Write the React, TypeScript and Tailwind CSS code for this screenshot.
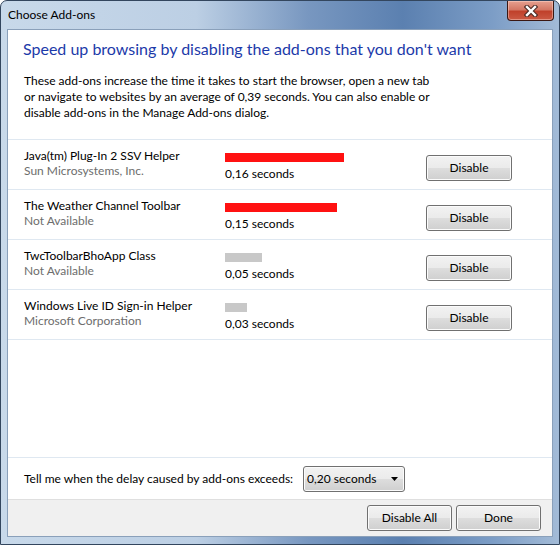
const addons = [
  { name: 'Java(tm) Plug-In 2 SSV Helper', publisher: 'Sun Microsystems, Inc.', time: '0,16', bar: 119, slow: true },
  { name: 'The Weather Channel Toolbar', publisher: 'Not Available', time: '0,15', bar: 112, slow: true },
  { name: 'TwcToolbarBhoApp Class', publisher: 'Not Available', time: '0,05', bar: 37, slow: false },
  { name: 'Windows Live ID Sign-in Helper', publisher: 'Microsoft Corporation', time: '0,03', bar: 22, slow: false },
];

const Btn = ({ children, className = '' }: { children: React.ReactNode; className?: string }) => (
  <button
    className={
      'flex items-center justify-center rounded-[3px] border border-[#707070] bg-[linear-gradient(#f2f2f2_0%,#ebebeb_48%,#dddddd_52%,#cfcfcf_100%)] text-[12px] text-black shadow-[inset_0_0_0_1px_#fbfbfb] ' +
      className
    }
  >
    {children}
  </button>
);

const App = () => {
  return (
    <div className="h-[545px] w-[560px] font-[Lato] text-[12px]">
      <div className="flex h-full flex-col rounded-t-[7px] border border-[#33465e] bg-[linear-gradient(90deg,#c8d9ea_0%,#bccfe4_35%,#7897c0_55%,#5b80b0_72%,#7c9dc6_88%,#a3bbd7_100%)]">
        {/* title bar */}
        <div className="flex h-[28px] shrink-0 items-start justify-between">
          <span className="ml-[7px] mt-[7px] text-[12px] leading-[14px] text-black">Choose Add-ons</span>
          <div className="mr-[5px] flex h-[20px] w-[47px] items-center justify-center rounded-b-[4px] border border-t-0 border-[#3a1712] bg-[linear-gradient(#e6a08f_0%,#d47865_45%,#c0412b_55%,#cb5a44_100%)] shadow-[inset_0_0_0_1px_rgba(255,220,210,0.45)]">
            <svg width="14" height="12" viewBox="0 0 14 12">
              <path d="M3 2 L11 10 M11 2 L3 10" stroke="#4a2a24" strokeWidth="4.5" strokeLinecap="square" />
              <path d="M3 2 L11 10 M11 2 L3 10" stroke="#ffffff" strokeWidth="2.4" strokeLinecap="square" />
            </svg>
          </div>
        </div>

        {/* client area */}
        <div className="mx-[6px] mb-[7px] flex flex-1 flex-col border border-[#8aa0ba] bg-white">
          <div className="flex flex-1 flex-col">
            <h1 className="ml-[15px] mt-[8px] text-[16px] leading-[22px] text-[#1c3aa9]">
              Speed up browsing by disabling the add-ons that you don't want
            </h1>
            <p className="ml-[16px] mt-[13px] w-[412px] leading-[16px] text-black">
              These add-ons increase the time it takes to start the browser, open a new tab or navigate to websites by an average of 0,39 seconds. You can also enable or disable add-ons in the Manage Add-ons dialog.
            </p>

            <div className="mt-[18px] border-t border-[#dfe8f1]">
              {addons.map(a => (
                <div key={a.name} className="flex h-[50px] items-start border-b border-[#dfe8f1] pl-[16px]">
                  <div className="mt-[8px] w-[201px] leading-[15px]">
                    <div className="text-black">{a.name}</div>
                    <div className="text-[#6d6d6d]">{a.publisher}</div>
                  </div>
                  <div className="mt-[13px] w-[201px]">
                    <div
                      className={a.slow ? 'h-[9px] bg-[#ff1111]' : 'h-[9px] bg-[#c8c8c8]'}
                      style={{ width: a.bar }}
                    />
                    <div className="mt-[4px] leading-[15px] text-black">{a.time} seconds</div>
                  </div>
                  <Btn className="mt-[15px] h-[26px] w-[86px]">Disable</Btn>
                </div>
              ))}
            </div>

            <div className="flex-1" />

            <div className="flex h-[42px] items-center border-t border-[#dfe8f1] pl-[16px]">
              <span className="text-black">Tell me when the delay caused by add-ons exceeds:</span>
              <div className="ml-[10px] flex h-[26px] w-[102px] items-center justify-between rounded-[3px] border border-[#707070] bg-[linear-gradient(#f2f2f2_0%,#ebebeb_48%,#dddddd_52%,#cfcfcf_100%)] pl-[3px] pr-[6px] shadow-[inset_0_0_0_1px_#fbfbfb]">
                <span className="text-black">0,20 seconds</span>
                <svg width="7" height="4" viewBox="0 0 7 4">
                  <path d="M0 0 H7 L3.5 4 Z" fill="#000" />
                </svg>
              </div>
            </div>
          </div>

          <div className="flex h-[37px] shrink-0 items-center justify-end gap-[4px] border-t border-[#dfdfdf] bg-[#f0f0f0] pr-[11px]">
            <Btn className="h-[26px] w-[85px]">Disable All</Btn>
            <Btn className="h-[26px] w-[85px]">Done</Btn>
          </div>
        </div>
      </div>
    </div>
  );
};

export default App;
